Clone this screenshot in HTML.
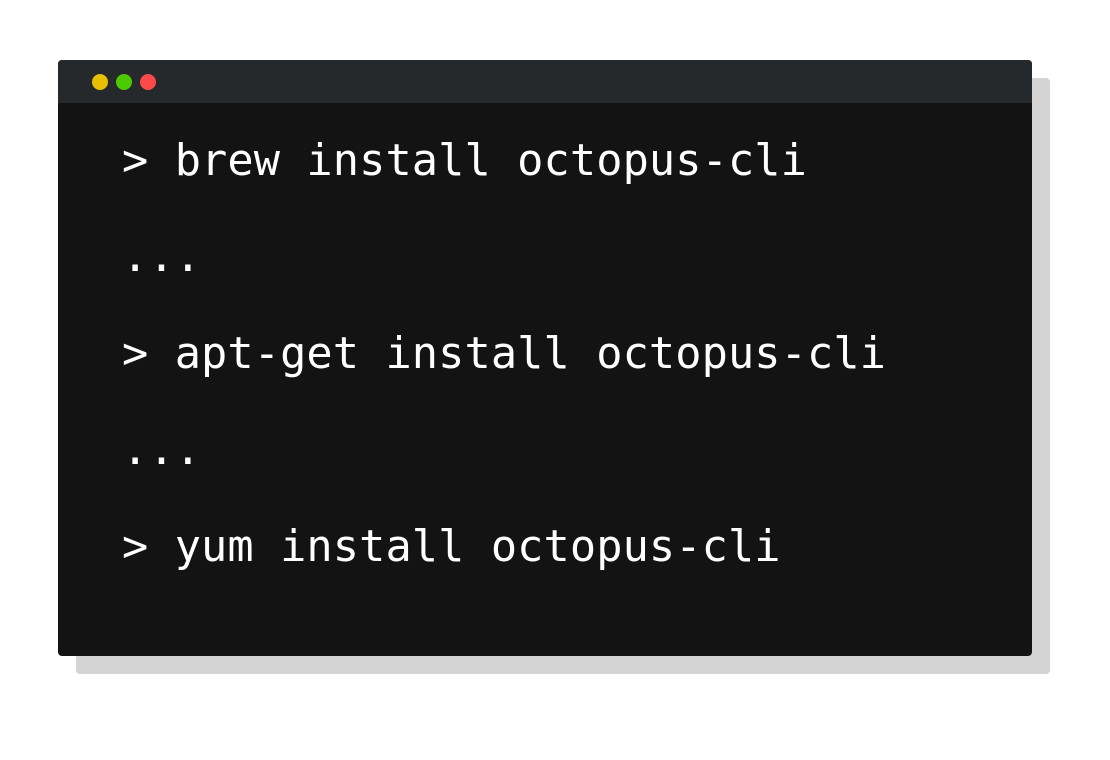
<!DOCTYPE html>
<html><head><meta charset="utf-8"><style>
html,body{margin:0;padding:0;background:#fff;width:1110px;height:760px;overflow:hidden;position:relative}
.sh{position:absolute;left:76px;top:78px;width:974px;height:596px;background:#d4d4d4;border-radius:4px}
.win{position:absolute;left:58px;top:60px;width:974px;height:596px;background:#131313;border-radius:4px;overflow:hidden}
.bar{position:absolute;left:0;top:0;width:100%;height:43px;background:#26292c}
.d{position:absolute;top:14px;width:16px;height:16px;border-radius:50%}
.t{position:absolute;left:64px;color:#fff;font-family:"DejaVu Sans Mono","Liberation Mono",monospace;font-size:43.6px;letter-spacing:0.1px;line-height:50px;white-space:pre}
</style></head><body>
<div class="sh"></div>
<div class="win">
<div class="bar">
<div class="d" style="left:34px;background:#e9bf00"></div>
<div class="d" style="left:58px;background:#4cca00"></div>
<div class="d" style="left:82px;background:#fc4a4a"></div>
</div>
<div class="t" style="top:76px">&gt; brew install octopus-cli</div>
<div class="t" style="top:172px">...</div>
<div class="t" style="top:269px">&gt; apt-get install octopus-cli</div>
<div class="t" style="top:365px">...</div>
<div class="t" style="top:462px">&gt; yum install octopus-cli</div>
</div>
</body></html>
